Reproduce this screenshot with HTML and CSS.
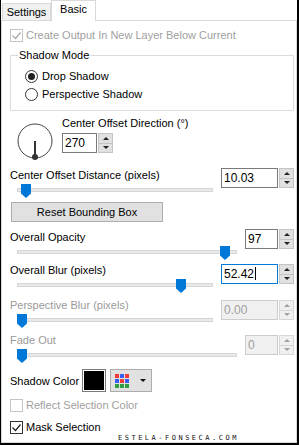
FILE: index.html
```html
<!DOCTYPE html>
<html lang="en">
<head>
    <meta charset="UTF-8">
    <title>Drop Shadow - Basic</title>
    <link rel="stylesheet" href="styles.css">
</head>
<body>
    <div class="window">
        <div class="tabs">
            <div class="tab">Settings</div>
            <div class="tab active">Basic</div>
        </div>

        <div class="panel">
            <div class="check disabled">
                <span class="box"><svg viewBox="0 0 11 11"><polyline points="1.5,5.5 4.5,8.5 9.5,2.5"/></svg></span>
                Create Output In New Layer Below Current
            </div>

            <fieldset class="group">
                <legend>Shadow Mode</legend>
                <div class="radio on"><span class="dot"></span>Drop Shadow</div>
                <div class="radio"><span class="dot"></span>Perspective Shadow</div>
            </fieldset>

            <div class="direction">
                <svg class="dial" viewBox="0 0 38 38">
                    <circle cx="19" cy="18" r="17"/>
                    <line x1="19" y1="18" x2="19" y2="34"/>
                    <circle class="knob" cx="19" cy="34" r="3"/>
                </svg>
                <div class="dir-col">
                    <div class="lbl">Center Offset Direction (°)</div>
                    <div class="spin dir">
                        <div class="field">270</div>
                        <div class="arrows"><span class="up"></span><span class="down"></span></div>
                    </div>
                </div>
            </div>

            <div class="srow first">
                <div class="smain">
                    <div class="lbl">Center Offset Distance (pixels)</div>
                    <div class="slider"><div class="track"></div><span class="thumb" style="left: 4px"></span></div>
                </div>
                <div class="spin wide">
                    <div class="field">10.03</div>
                    <div class="arrows"><span class="up"></span><span class="down"></span></div>
                </div>
            </div>

            <button class="reset">Reset Bounding Box</button>

            <div class="srow opacity">
                <div class="smain">
                    <div class="lbl">Overall Opacity</div>
                    <div class="slider"><div class="track"></div><span class="thumb" style="left: 203px"></span></div>
                </div>
                <div class="spin narrow">
                    <div class="field">97</div>
                    <div class="arrows"><span class="up"></span><span class="down"></span></div>
                </div>
            </div>

            <div class="srow blur">
                <div class="smain">
                    <div class="lbl">Overall Blur (pixels)</div>
                    <div class="slider"><div class="track"></div><span class="thumb" style="left: 159px"></span></div>
                </div>
                <div class="spin wide focused">
                    <div class="field">52.42<span class="caret"></span></div>
                    <div class="arrows"><span class="up"></span><span class="down"></span></div>
                </div>
            </div>

            <div class="srow persp off">
                <div class="smain">
                    <div class="lbl">Perspective Blur (pixels)</div>
                    <div class="slider"><div class="track"></div><span class="thumb" style="left: 0"></span></div>
                </div>
                <div class="spin wide">
                    <div class="field">0.00</div>
                    <div class="arrows"><span class="up"></span><span class="down"></span></div>
                </div>
            </div>

            <div class="srow fade off">
                <div class="smain">
                    <div class="lbl">Fade Out</div>
                    <div class="slider"><div class="track"></div><span class="thumb" style="left: 0"></span></div>
                </div>
                <div class="spin narrow">
                    <div class="field">0</div>
                    <div class="arrows"><span class="up"></span><span class="down"></span></div>
                </div>
            </div>

            <div class="colorrow">
                <span class="color-lbl">Shadow Color</span>
                <span class="swatch"></span>
                <span class="colorbtn">
                    <span class="grid">
                        <i class="r"></i><i class="b"></i><i class="r"></i>
                        <i class="b"></i><i class="r"></i><i class="b"></i>
                        <i class="g"></i><i class="g"></i><i class="g"></i>
                    </span>
                    <span class="drop"></span>
                </span>
            </div>

            <div class="check disabled reflect">
                <span class="box"></span>
                Reflect Selection Color
            </div>

            <div class="check mask">
                <span class="box"><svg viewBox="0 0 11 11"><polyline points="1.5,5.5 4.5,8.5 9.5,2.5"/></svg></span>
                Mask Selection
            </div>
        </div>

        <div class="watermark">estela-fonseca.com</div>
    </div>
</body>
</html>
```

FILE: styles.css
```css
* {
    margin: 0;
    padding: 0;
    box-sizing: border-box;
}
body {
    font-family: "Liberation Sans", Arial, sans-serif;
    font-size: 11px;
    color: #000;
    background: #fff;
}
.window {
    position: relative;
    width: 299px;
    height: 445px;
    border-left: 1px solid #000;
    border-right: 2px solid #000;
    border-bottom: 2px solid #000;
    display: flex;
    flex-direction: column;
    background: #fff;
}

/* tabs */
.tabs {
    display: flex;
    align-items: flex-end;
    height: 20px;
    padding-left: 1px;
}
.tab {
    width: 49px;
    height: 17px;
    border: 1px solid #d9d9d9;
    border-bottom: none;
    background: #f0f0f0;
    text-align: center;
    line-height: 16px;
}
.tab.active {
    width: 45px;
    height: 21px;
    margin-bottom: -1px;
    background: #fff;
    line-height: 17px;
    position: relative;
    z-index: 1;
}

.panel {
    flex: 1;
    border: 1px solid #d9d9d9;
    padding: 7px 2px 0 8px;
}

/* checkboxes and radios */
.check {
    display: flex;
    align-items: center;
    gap: 3px;
    height: 14px;
}
.box {
    width: 13px;
    height: 13px;
    border: 1px solid #333;
    background: #fff;
}
.box svg {
    display: block;
    width: 11px;
    height: 11px;
}
.box polyline {
    fill: none;
    stroke: #222;
    stroke-width: 1.2;
}
.check.disabled {
    color: #a0a0a0;
}
.check.disabled .box {
    border-color: #c4c4c4;
}
.check.disabled polyline {
    stroke: #a8a8a8;
}
.reflect {
    margin-top: 6px;
}
.mask {
    margin-top: 8px;
}

.group {
    margin-top: 6px;
    border: 1px solid #dcdcdc;
    padding: 0 0 7px 7px;
}
.group legend {
    padding: 0 1px;
    line-height: 14px;
}
.radio {
    display: flex;
    align-items: center;
    gap: 4px;
    height: 18px;
    margin-left: 7px;
}
.radio:first-of-type {
    margin-top: 5px;
}
.dot {
    width: 13px;
    height: 13px;
    border: 1px solid #333;
    border-radius: 50%;
    background: #fff;
    display: flex;
    align-items: center;
    justify-content: center;
}
.radio.on .dot::after {
    content: "";
    width: 7px;
    height: 7px;
    border-radius: 50%;
    background: #222;
}

/* direction dial */
.direction {
    display: flex;
    margin-top: 5px;
}
.dial {
    width: 38px;
    height: 38px;
    margin: 7px 0 0 6px;
}
.dial circle {
    fill: none;
    stroke: #444;
    stroke-width: 1;
}
.dial line {
    stroke: #333;
    stroke-width: 2;
}
.dial .knob {
    fill: #333;
    stroke: none;
}
.dir-col {
    margin-left: 8px;
}
.lbl {
    line-height: 14px;
}

/* spin boxes */
.spin {
    display: flex;
    height: 20px;
}
.spin .field {
    border: 1px solid #7a7a7a;
    background: #fff;
    font-size: 12px;
    line-height: 18px;
    padding-left: 2px;
    color: #000;
}
.spin.dir {
    margin-top: 3px;
}
.spin.dir .field {
    width: 35px;
}
.spin.wide .field {
    width: 57px;
}
.spin.narrow .field {
    width: 33px;
}
.spin.focused .field {
    border-color: #0078d7;
}
.caret {
    display: inline-block;
    width: 1px;
    height: 13px;
    background: #000;
    vertical-align: -2px;
    margin-left: 1px;
}
.arrows {
    display: flex;
    flex-direction: column;
    width: 15px;
    margin-left: 1px;
}
.arrows span {
    flex: 1;
    background: #e1e1e1;
    border: 1px solid #c4c4c4;
    display: flex;
    align-items: center;
    justify-content: center;
}
.arrows span + span {
    border-top: none;
}
.arrows .up::after {
    content: "";
    border-left: 3px solid transparent;
    border-right: 3px solid transparent;
    border-bottom: 3px solid #222;
}
.arrows .down::after {
    content: "";
    border-left: 3px solid transparent;
    border-right: 3px solid transparent;
    border-top: 3px solid #222;
}

/* slider rows */
.srow {
    display: flex;
}
.smain {
    flex: 1;
}
.slider {
    position: relative;
    height: 16px;
    margin: 0 8px 0 7px;
}
.track {
    position: absolute;
    left: 0;
    right: 0;
    top: 6px;
    height: 4px;
    background: #e7eaea;
    border: 1px solid #d6d6d6;
}
.thumb {
    position: absolute;
    top: 2px;
    width: 10px;
    height: 14px;
    background: #0078d7;
    clip-path: polygon(0 0, 100% 0, 100% 68%, 50% 100%, 0 68%);
}
.srow.first {
    margin-top: 7px;
}
.srow.opacity {
    margin-top: 8px;
}
.srow.opacity .spin {
    margin-top: -1px;
}
.srow.blur {
    margin-top: 3px;
}
.srow.blur .spin {
    margin-top: 1px;
}
.srow.persp, .srow.fade {
    margin-top: 5px;
}
.srow.persp .spin, .srow.fade .spin {
    margin-top: 2px;
}
.srow.off .lbl {
    color: #9a9a9a;
}
.srow.off .field {
    background: #f0f0f0;
    border-color: #cccccc;
    color: #a0a0a0;
}
.srow.off .arrows span {
    background: #f0f0f0;
    border-color: #d6d6d6;
}
.srow.off .arrows .up::after {
    border-bottom-color: #a0a0a0;
}
.srow.off .arrows .down::after {
    border-top-color: #a0a0a0;
}

.reset {
    display: block;
    width: 152px;
    height: 20px;
    margin: 4px 0 0 1px;
    background: #e1e1e1;
    border: 1px solid #adadad;
    font-family: inherit;
    font-size: 11px;
    color: #000;
}

/* shadow colour */
.colorrow {
    display: flex;
    align-items: center;
    height: 23px;
    margin-top: 6px;
}
.color-lbl {
    width: 72px;
}
.swatch {
    width: 24px;
    height: 23px;
    border: 1px solid #7a7a7a;
    background: #000;
    box-shadow: inset 0 0 0 1px #fff;
}
.colorbtn {
    display: flex;
    align-items: center;
    gap: 11px;
    width: 42px;
    height: 23px;
    margin-left: 4px;
    padding-left: 4px;
    background: #e1e1e1;
    border: 1px solid #adadad;
}
.grid {
    display: grid;
    grid-template-columns: repeat(3, 4px);
    grid-auto-rows: 4px;
    gap: 1px;
}
.grid i {
    display: block;
}
.grid .r {
    background: #f03a3a;
}
.grid .b {
    background: #3a5cf0;
}
.grid .g {
    background: #2f9e44;
}
.drop {
    border-left: 3px solid transparent;
    border-right: 3px solid transparent;
    border-top: 3px solid #111;
}

.watermark {
    position: absolute;
    left: 117px;
    top: 434px;
    font-family: "DejaVu Sans Mono", monospace;
    font-size: 7px;
    letter-spacing: 2.5px;
    text-transform: uppercase;
    color: #111;
}
```
